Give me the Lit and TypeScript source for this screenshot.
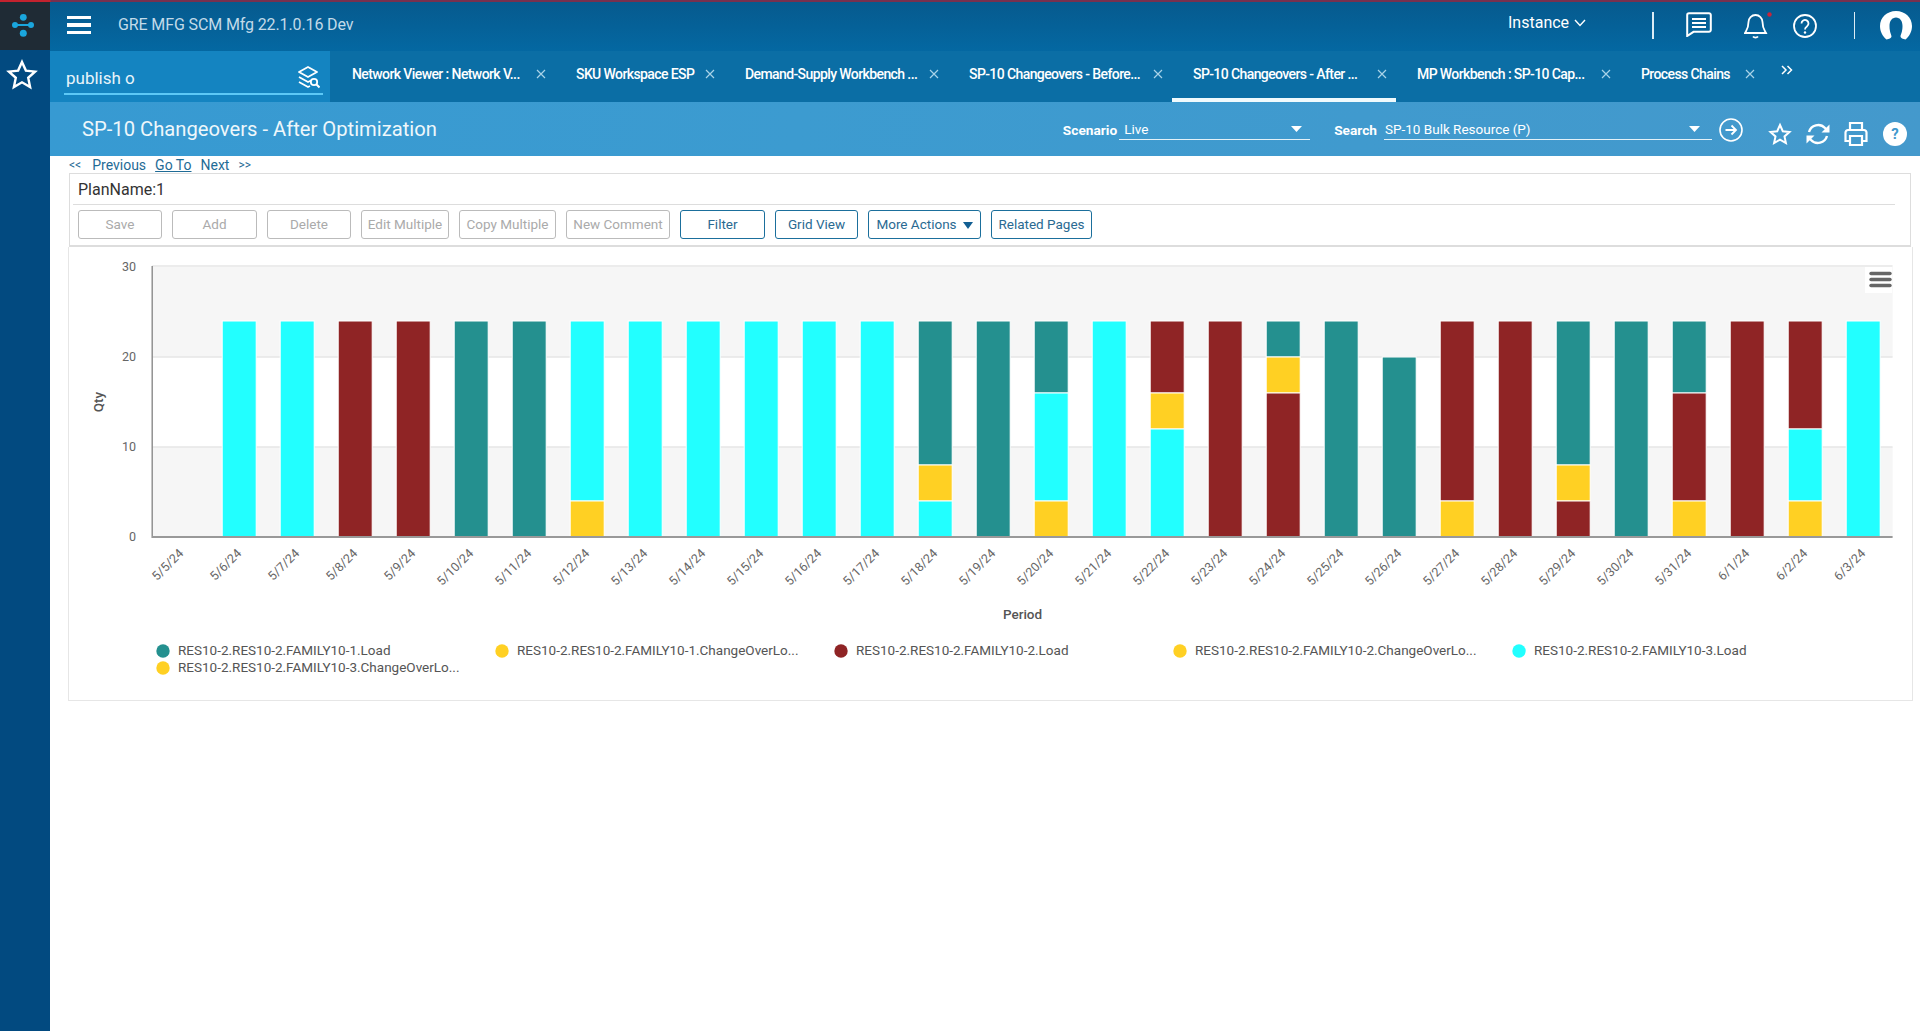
import { LitElement, css, html, svg } from 'lit';
import { customElement } from 'lit/decorators.js';

const TEAL = '#24908f';
const CYAN = '#22ffff';
const RED = '#8f2425';
const YELLOW = '#ffd023';

type Seg = [string, number];

const DAYS: { label: string; segs: Seg[] }[] = [
  { label: '5/5/24', segs: [] },
  { label: '5/6/24', segs: [[CYAN, 24]] },
  { label: '5/7/24', segs: [[CYAN, 24]] },
  { label: '5/8/24', segs: [[RED, 24]] },
  { label: '5/9/24', segs: [[RED, 24]] },
  { label: '5/10/24', segs: [[TEAL, 24]] },
  { label: '5/11/24', segs: [[TEAL, 24]] },
  { label: '5/12/24', segs: [[CYAN, 20], [YELLOW, 4]] },
  { label: '5/13/24', segs: [[CYAN, 24]] },
  { label: '5/14/24', segs: [[CYAN, 24]] },
  { label: '5/15/24', segs: [[CYAN, 24]] },
  { label: '5/16/24', segs: [[CYAN, 24]] },
  { label: '5/17/24', segs: [[CYAN, 24]] },
  { label: '5/18/24', segs: [[TEAL, 16], [YELLOW, 4], [CYAN, 4]] },
  { label: '5/19/24', segs: [[TEAL, 24]] },
  { label: '5/20/24', segs: [[TEAL, 8], [CYAN, 12], [YELLOW, 4]] },
  { label: '5/21/24', segs: [[CYAN, 24]] },
  { label: '5/22/24', segs: [[RED, 8], [YELLOW, 4], [CYAN, 12]] },
  { label: '5/23/24', segs: [[RED, 24]] },
  { label: '5/24/24', segs: [[TEAL, 4], [YELLOW, 4], [RED, 16]] },
  { label: '5/25/24', segs: [[TEAL, 24]] },
  { label: '5/26/24', segs: [[TEAL, 20]] },
  { label: '5/27/24', segs: [[RED, 20], [YELLOW, 4]] },
  { label: '5/28/24', segs: [[RED, 24]] },
  { label: '5/29/24', segs: [[TEAL, 16], [YELLOW, 4], [RED, 4]] },
  { label: '5/30/24', segs: [[TEAL, 24]] },
  { label: '5/31/24', segs: [[TEAL, 8], [RED, 12], [YELLOW, 4]] },
  { label: '6/1/24', segs: [[RED, 24]] },
  { label: '6/2/24', segs: [[RED, 12], [CYAN, 8], [YELLOW, 4]] },
  { label: '6/3/24', segs: [[CYAN, 24]] },
];

const LEGEND: { name: string; color: string; x: number; y: number }[] = [
  { name: 'RES10-2.RES10-2.FAMILY10-1.Load', color: TEAL, x: 163, y: 651 },
  { name: 'RES10-2.RES10-2.FAMILY10-1.ChangeOverLo...', color: YELLOW, x: 502, y: 651 },
  { name: 'RES10-2.RES10-2.FAMILY10-2.Load', color: RED, x: 841, y: 651 },
  { name: 'RES10-2.RES10-2.FAMILY10-2.ChangeOverLo...', color: YELLOW, x: 1180, y: 651 },
  { name: 'RES10-2.RES10-2.FAMILY10-3.Load', color: CYAN, x: 1519, y: 651 },
  { name: 'RES10-2.RES10-2.FAMILY10-3.ChangeOverLo...', color: YELLOW, x: 163, y: 668 },
];

// each tab title sits in a box of its own width
const TABS: { text: string; width: number; active?: boolean }[] = [
  { text: 'Network Viewer : Network V...', width: 170 },
  { text: 'SKU Workspace ESP', width: 115 },
  { text: 'Demand-Supply Workbench ...', width: 170 },
  { text: 'SP-10 Changeovers - Before...', width: 170 },
  { text: 'SP-10 Changeovers - After ...', width: 170, active: true },
  { text: 'MP Workbench : SP-10 Cap...', width: 170 },
  { text: 'Process Chains', width: 90 },
];

const BUTTONS: { text: string; width: number; on?: boolean; caret?: boolean }[] = [
  { text: 'Save', width: 84 },
  { text: 'Add', width: 85 },
  { text: 'Delete', width: 84 },
  { text: 'Edit Multiple', width: 88 },
  { text: 'Copy Multiple', width: 97 },
  { text: 'New Comment', width: 104 },
  { text: 'Filter', width: 85, on: true },
  { text: 'Grid View', width: 83, on: true },
  { text: 'More Actions', width: 113, on: true, caret: true },
  { text: 'Related Pages', width: 101, on: true },
];

const PLOT_LEFT = 152.2;
const PLOT_RIGHT = 1892.6;
const BASE_Y = 537;
const UNIT = 9;
const PITCH = 58;
const BAR_W = 34;

function chart() {
  return html`
    <svg class="chart" viewBox="69 247 1843 453" width="1843" height="453">
      <rect x=${PLOT_LEFT} y="267" width=${PLOT_RIGHT - PLOT_LEFT} height="90" fill="#f6f6f6"></rect>
      <rect x=${PLOT_LEFT} y="447" width=${PLOT_RIGHT - PLOT_LEFT} height="90" fill="#f6f6f6"></rect>
      ${[266, 357, 447].map(
        (y) => svg`<line x1=${PLOT_LEFT} x2=${PLOT_RIGHT} y1=${y} y2=${y} stroke="#e6e6e6" stroke-width="1.4"></line>`
      )}
      ${[[30, 271], [20, 361], [10, 451], [0, 541]].map(
        ([v, y]) => svg`<text class="tick" x="136" y=${y} text-anchor="end">${v}</text>`
      )}
      <text class="axis-title" transform="translate(103 402) rotate(-90)" text-anchor="middle">Qty</text>
      ${DAYS.map((d, i) => {
        const cx = PLOT_LEFT + PITCH * (i + 0.5);
        let top = BASE_Y - d.segs.reduce((sum, s) => sum + s[1], 0) * UNIT;
        const rects = d.segs.map(([color, qty]) => {
          const r = svg`<rect x=${cx - BAR_W / 2} y=${top} width=${BAR_W} height=${qty * UNIT} fill=${color} stroke="#fff" stroke-width="1"></rect>`;
          top += qty * UNIT;
          return r;
        });
        return svg`${rects}<text class="tick" text-anchor="end" transform="translate(${cx + 3} 554) rotate(-45)">${d.label}</text>`;
      })}
      <line x1=${PLOT_LEFT} x2=${PLOT_LEFT} y1="266" y2="538" stroke="#8a8a8a" stroke-width="1.4"></line>
      <line x1=${PLOT_LEFT} x2=${PLOT_RIGHT} y1=${BASE_Y} y2=${BASE_Y} stroke="#999" stroke-width="2"></line>
      <rect x="1865" y="267" width="27" height="26" fill="#fff"></rect>
      ${[273.5, 279.5, 285.5].map(
        (y) => svg`<line x1="1871" x2="1890" y1=${y} y2=${y} stroke="#666" stroke-width="3.4" stroke-linecap="round"></line>`
      )}
      <text class="axis-title" x="1022.5" y="619" text-anchor="middle">Period</text>
      ${LEGEND.map(
        (l) => svg`<circle cx=${l.x} cy=${l.y} r="6.7" fill=${l.color}></circle>
          <text class="legend" x=${l.x + 15} y=${l.y + 4}>${l.name}</text>`
      )}
    </svg>
  `;
}

const closeIcon = html`<svg class="close" viewBox="0 0 10 10" width="10" height="10"><path d="M1 1l8 8M9 1l-8 8" stroke="#a9d3e8" stroke-width="1.2" fill="none"></path></svg>`;
const selectCaret = html`<svg viewBox="0 0 11 6" width="11" height="6"><path d="M0 0h11L5.5 6z" fill="#fff"></path></svg>`;

@customElement('app-root')
export class AppRoot extends LitElement {
  render() {
    return html`
      <div class="stripe"></div>
      <div class="shell">
        <aside class="rail">
          <div class="logo">
            <svg viewBox="0 0 50 48" width="50" height="48">
              <rect x="15" y="22" width="16" height="2" fill="#1aa6dd"></rect>
              <circle cx="23.3" cy="15.3" r="3.4" fill="#1aa6dd"></circle>
              <circle cx="23.3" cy="31.3" r="3.5" fill="#1aa6dd"></circle>
              <circle cx="15" cy="23" r="3" fill="#1aa6dd"></circle>
              <circle cx="31" cy="23" r="3" fill="#1aa6dd"></circle>
            </svg>
          </div>
          <div class="fav">
            <svg viewBox="0 0 32 32" width="32" height="32">
              <path d="M16 3l3.9 8.6 9.2 1-6.9 6.2 1.9 9.2-8.100-4.700L7.900 28l1.900-9.200-6.900-6.200 9.200-1z" fill="none" stroke="#fff" stroke-width="2.400" stroke-linejoin="miter"></path>
            </svg>
          </div>
        </aside>
        <main class="main">
          <header class="top">
            <div class="burger"><span></span><span></span><span></span></div>
            <div class="app-title">GRE MFG SCM Mfg 22.1.0.16 Dev</div>
            <div class="grow"></div>
            <div class="instance">
              Instance
              <svg viewBox="0 0 12 8" width="12" height="8"><path d="M1 1l5 5.500L11 1" fill="none" stroke="#fff" stroke-width="1.400"></path></svg>
            </div>
            <div class="vr"></div>
            <svg class="chat" viewBox="0 0 26 25" width="26" height="25">
              <path d="M3 1.200h20a1.800 1.800 0 0 1 1.800 1.800v15a1.800 1.800 0 0 1-1.800 1.800H7.500L1.200 24V3A1.800 1.800 0 0 1 3 1.200z" fill="none" stroke="#fff" stroke-width="2"></path>
              <path d="M6 7h14M6 11h14M6 15h14" stroke="#fff" stroke-width="2"></path>
            </svg>
            <svg class="bell" viewBox="0 0 28 28" width="28" height="28">
              <path d="M11.500 3a7 7 0 0 0-7 7c0 7-2.500 9-3.500 11h21c-1-2-3.500-4-3.500-11a7 7 0 0 0-7-7z" fill="none" stroke="#fff" stroke-width="1.800"></path>
              <path d="M9 24.500a3 2.500 0 0 0 5 0" fill="none" stroke="#fff" stroke-width="1.800"></path>
              <circle cx="25.500" cy="2.500" r="2.200" fill="#c8243a"></circle>
            </svg>
            <svg class="help" viewBox="0 0 24 24" width="24" height="24">
              <circle cx="12" cy="12" r="11" fill="none" stroke="#fff" stroke-width="1.800"></circle>
              <path d="M8.500 9.500a3.500 3.500 0 1 1 5.400 2.900c-1.200.8-1.900 1.500-1.900 3" fill="none" stroke="#fff" stroke-width="1.800"></path>
              <circle cx="12" cy="18.500" r="1.200" fill="#fff"></circle>
            </svg>
            <div class="vr vr2"></div>
            <svg class="avatar" viewBox="0 0 32 30" width="32" height="30">
              <path d="M16 0C7 0 0 6.500 0 15c0 5.500 2.500 10 6.500 13.500 2.500-.5 5-1.500 5-3 0-2-2-4-2-10.500 0-5 2.500-8.500 6.500-8.500s6.500 3.500 6.500 8.500c0 6.500-2 8.500-2 10.500 0 1.500 2.500 2.500 5 3C29.500 25 32 20.500 32 15 32 6.500 25 0 16 0z" fill="#fff"></path>
            </svg>
          </header>

          <nav class="tabs">
            <div class="search">
              <span>publish o</span>
              <svg viewBox="0 0 22 25" width="22" height="25">
                <path d="M10 1l9 5-9 5-9-5z" fill="none" stroke="#fff" stroke-width="1.800" stroke-linejoin="round"></path>
                <path d="M1 11l9 5 3-1.500M1 16l9 5 2-1" fill="none" stroke="#fff" stroke-width="1.800" stroke-linejoin="round"></path>
                <circle cx="16" cy="16" r="3.200" fill="none" stroke="#fff" stroke-width="1.800"></circle>
                <path d="M18.500 18.500l3 3" stroke="#fff" stroke-width="2"></path>
              </svg>
            </div>
            ${TABS.map(
              (t) => html`<div class="tab ${t.active ? 'active' : ''}">
                <span style="width:${t.width}px">${t.text}</span>${closeIcon}
              </div>`
            )}
            <svg class="more" viewBox="0 0 12 10" width="12" height="10">
              <path d="M1 1l4 4-4 4M6.500 1l4 4-4 4" fill="none" stroke="#fff" stroke-width="1.500"></path>
            </svg>
          </nav>

          <section class="page-bar">
            <h1>SP-10 Changeovers - After Optimization</h1>
            <div class="grow"></div>
            <label>Scenario</label>
            <div class="select scenario"><span>Live</span>${selectCaret}</div>
            <label class="search-label">Search</label>
            <div class="select resource"><span>SP-10 Bulk Resource (P)</span>${selectCaret}</div>
            <svg class="go" viewBox="0 0 24 24" width="24" height="24">
              <circle cx="12" cy="12" r="11" fill="none" stroke="#fff" stroke-width="1.600"></circle>
              <path d="M6.500 12h10M12.500 7.500l4.500 4.500-4.500 4.500" fill="none" stroke="#fff" stroke-width="1.800"></path>
            </svg>
            <svg class="tool star" viewBox="0 0 24 24" width="24" height="24">
              <path d="M12 3l2.800 6.200 6.700.700-5 4.500 1.400 6.600-5.900-3.400-5.900 3.400 1.400-6.600-5-4.500 6.700-.7z" fill="none" stroke="#fff" stroke-width="2"></path>
            </svg>
            <svg class="tool refresh" viewBox="0 0 26 26" width="26" height="26">
              <path d="M4 11a9.500 9.500 0 0 1 16-4l2 2M22 15a9.500 9.500 0 0 1-16 4l-2-2" fill="none" stroke="#fff" stroke-width="2.400"></path>
              <path d="M24.500 3.500v8h-8zM1.500 22.500v-8h8z" fill="#fff"></path>
            </svg>
            <svg class="tool print" viewBox="0 0 26 26" width="26" height="26">
              <path d="M7 9V2h12v7M7 20H2.500v-8.500a2.500 2.500 0 0 1 2.500-2.500h16a2.500 2.500 0 0 1 2.500 2.500V20H19" fill="none" stroke="#fff" stroke-width="2.200"></path>
              <path d="M7 15h12v9H7z" fill="none" stroke="#fff" stroke-width="2.200"></path>
            </svg>
            <div class="tool qmark">?</div>
          </section>

          <div class="crumbs">
            <span class="dim first">&lt;&lt;</span>
            <a>Previous</a>
            <a class="goto">Go To</a>
            <a>Next</a>
            <span class="dim">&gt;&gt;</span>
          </div>

          <section class="plan">
            <div class="plan-name">PlanName:1</div>
            <div class="actions">
              ${BUTTONS.map(
                (b) => html`<button class=${b.on ? 'on' : ''} style="width:${b.width}px">
                  ${b.text}${b.caret ? html`<i class="caret"></i>` : null}
                </button>`
              )}
            </div>
          </section>

          <section class="chart-panel">${chart()}</section>
        </main>
      </div>
    `;
  }

  static styles = css`
    :host {
      display: block;
      height: 1031px;
      overflow: hidden;
      background: #fff;
      font-family: Roboto, 'Liberation Sans', sans-serif;
      color: #333;
    }

    .stripe {
      height: 2px;
      background: linear-gradient(90deg, #c4222e 0, #c4222e 50px, #77304f 51px);
    }

    .shell {
      display: flex;
      height: 1029px;
    }

    .grow {
      flex: 1;
    }

    .rail {
      flex: 0 0 50px;
      background: #024a80;
    }

    .logo {
      height: 48px;
      background: #1f2b35;
    }

    .logo svg,
    .fav svg {
      display: block;
    }

    .fav {
      padding: 9px 0 0 6px;
    }

    .main {
      flex: 1;
      min-width: 0;
    }

    .top {
      display: flex;
      align-items: center;
      height: 49px;
      background: linear-gradient(#065a8e, #0468a2);
      color: #fff;
    }

    .burger {
      display: flex;
      flex-direction: column;
      justify-content: space-between;
      width: 24px;
      height: 18px;
      margin-left: 17px;
      margin-top: -3px;
    }

    .burger span {
      height: 3.4px;
      background: #fff;
    }

    .app-title {
      margin-left: 27px;
      margin-top: -5px;
      font-size: 16px;
      letter-spacing: -0.12px;
      color: #c3dbe9;
    }

    .instance {
      display: flex;
      align-items: center;
      gap: 5px;
      width: 144px;
      margin-top: -8px;
      font-size: 16px;
    }

    .vr {
      width: 1.5px;
      height: 27px;
      background: #dcecf5;
      margin-top: -2px;
    }

    .vr2 {
      margin-left: 37px;
    }

    .chat {
      margin: -4px 0 0 32px;
    }

    .bell {
      margin: -2px 0 0 32px;
    }

    .help {
      margin: -2px 0 0 21px;
    }

    .avatar {
      margin: -1px 8px 0 25px;
    }

    .tabs {
      display: flex;
      align-items: stretch;
      height: 51px;
      background: #0b6ea5;
      color: #fff;
    }

    .search {
      position: relative;
      display: flex;
      flex: 0 0 280px;
      align-items: center;
      justify-content: space-between;
      box-sizing: border-box;
      margin-right: 1px;
      padding: 3px 10px 0 16px;
      background: #1484c1;
      font-size: 17px;
      color: #e8f4fa;
    }

    .search::after {
      content: '';
      position: absolute;
      left: 14px;
      right: 7px;
      top: 42px;
      height: 2px;
      background: #5cc8f6;
    }

    .tab {
      display: flex;
      align-items: center;
      gap: 14px;
      box-sizing: border-box;
      height: 51px;
      padding: 0 9px 1px 21px;
      border-bottom: 4px solid transparent;
      font-size: 14px;
      font-weight: 500;
      letter-spacing: -0.6px;
      white-space: nowrap;
    }

    .tab span {
      display: block;
    }

    .tab.active {
      border-bottom-color: #f0fafd;
    }

    .more {
      align-self: flex-start;
      margin: 14px 0 0 17px;
    }

    .page-bar {
      display: flex;
      align-items: center;
      height: 54px;
      padding: 0 13px 0 32px;
      background: linear-gradient(100deg, #379ad2 0, #3c9bd0 40%, #4499cc 100%);
      color: #fff;
      font-size: 13.500px;
    }

    h1 {
      margin: 0;
      font-size: 20.200px;
      font-weight: 400;
      color: #eef7fb;
    }

    label {
      font-size: 13.700px;
      font-weight: 700;
      margin-top: 1px;
    }

    .search-label {
      margin-left: 24px;
    }

    .select {
      display: flex;
      align-items: center;
      justify-content: space-between;
      box-sizing: border-box;
      height: 20px;
      margin-left: 2px;
      margin-top: 1px;
      border-bottom: 1.500px solid #e3f1f8;
      font-size: 13.500px;
    }

    .select span {
      font-weight: 400;
    }

    .scenario {
      width: 191px;
      padding: 0 8px 0 5px;
    }

    .resource {
      width: 328px;
      margin-left: 7px;
      padding: 0 12px 0 1px;
    }

    .go {
      margin: 2px 0 0 7px;
    }

    .tool {
      margin-top: 10px;
    }

    .star {
      margin-left: 25px;
    }

    .refresh {
      margin-left: 13px;
    }

    .print {
      margin-left: 12px;
    }

    .qmark {
      display: flex;
      align-items: center;
      justify-content: center;
      width: 24px;
      height: 24px;
      margin-left: 14px;
      border-radius: 50%;
      background: #fff;
      color: #3f98cd;
      font-size: 15px;
      font-weight: 700;
    }

    .crumbs {
      display: flex;
      align-items: center;
      gap: 9px;
      height: 17px;
      padding-left: 19px;
      font-size: 14px;
      color: #1f6b96;
    }

    .crumbs .dim {
      font-size: 12px;
    }

    .crumbs .first {
      margin-right: 2px;
    }

    .goto {
      text-decoration: underline;
    }

    .plan {
      box-sizing: border-box;
      width: 1842px;
      height: 74px;
      margin-left: 19px;
      border: 1px solid #ddd;
      border-bottom-width: 2px;
    }

    .plan-name {
      box-sizing: border-box;
      height: 31px;
      margin: 0 15px 0 3px;
      padding: 6px 0 0 5px;
      border-bottom: 1px solid #ddd;
      font-size: 16px;
    }

    .actions {
      display: flex;
      gap: 10px;
      padding: 5px 0 0 8px;
    }

    button {
      display: inline-flex;
      align-items: center;
      justify-content: center;
      gap: 6px;
      box-sizing: border-box;
      height: 29px;
      padding: 0 0 2px;
      background: #fff;
      border: 1px solid #bbb;
      border-radius: 3px;
      color: #aaa;
      font: 400 13.500px Roboto, 'Liberation Sans', sans-serif;
    }

    button.on {
      border-color: #1b6f9c;
      color: #2a6a92;
    }

    .caret {
      width: 0;
      height: 0;
      border-left: 5px solid transparent;
      border-right: 5px solid transparent;
      border-top: 7px solid #125f93;
      margin-top: 4px;
    }

    .chart-panel {
      box-sizing: border-box;
      width: 1845px;
      height: 454px;
      margin-left: 18px;
      border: 1px solid #e6e6e6;
      border-top: 0;
    }

    .chart {
      display: block;
    }

    .tick {
      font-size: 12.500px;
      fill: #666;
    }

    .axis-title {
      font-size: 13.500px;
      font-weight: 500;
      fill: #555;
    }

    .legend {
      font-size: 13.500px;
      fill: #555;
    }
  `;
}

declare global {
  interface HTMLElementTagNameMap {
    'app-root': AppRoot;
  }
}
